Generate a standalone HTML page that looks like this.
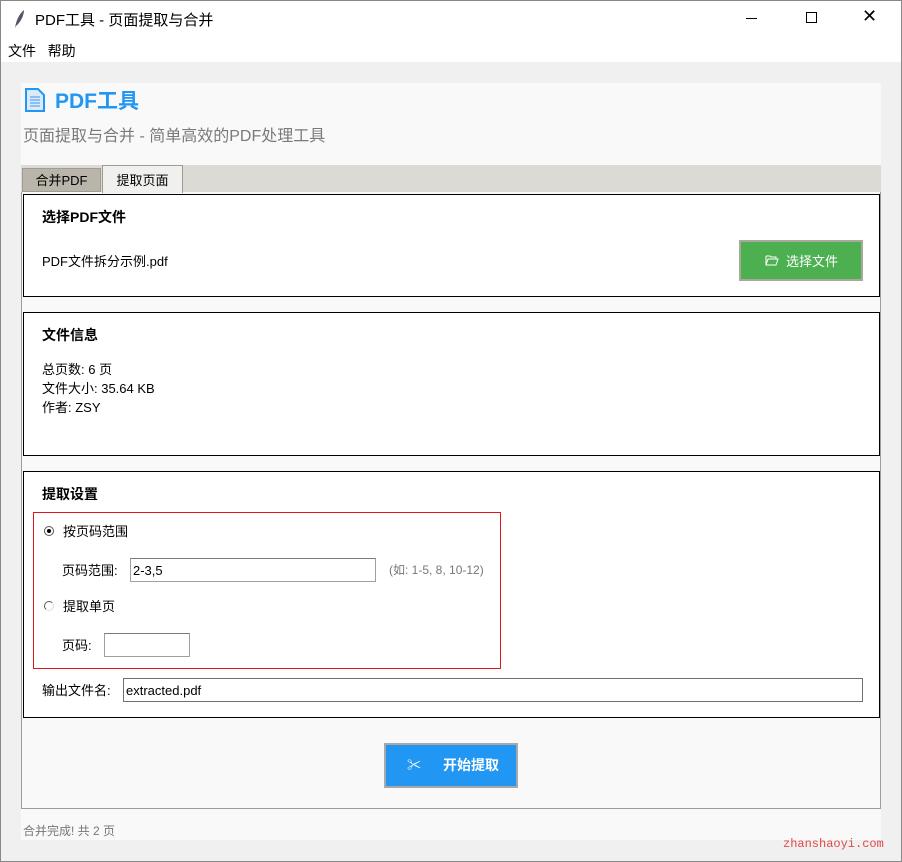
<!DOCTYPE html>
<html><head><meta charset="utf-8"><style>
*{margin:0;padding:0;box-sizing:border-box}
body{width:902px;height:862px;position:relative;background:#f0f0f0;font-family:"Liberation Sans","Noto Sans CJK SC",sans-serif;overflow:hidden;color:#000}
.a{position:absolute}
.win{left:0;top:0;width:902px;height:862px;border:1px solid #888}
.box{background:#fff;border:1px solid #000}
.t{font-size:13px;white-space:nowrap}
.inp{background:#fff;border:1px solid #a0a0a0;border-top-color:#7a7a7a;font-size:13px;padding:3px 2px 0;line-height:17px}
</style></head><body>
<div class="a" style="left:0;top:0;width:902px;height:62px;background:#fff"></div>
<svg class="a" style="left:12px;top:9px" width="14" height="20" viewBox="0 0 14 20"><path d="M3 19 C4 12 7 5 12 1 C12 6 9 13 4 17Z" fill="#556"/></svg>
<div class="a t" style="left:35px;top:9px;font-size:15px">PDF工具 - 页面提取与合并</div>
<div class="a" style="left:746px;top:18px;width:11px;height:1px;background:#000"></div>
<div class="a" style="left:806px;top:12px;width:11px;height:11px;border:1px solid #000"></div>
<div class="a t" style="left:862px;top:6px;font-size:18px;font-weight:300">✕</div>
<div class="a t" style="left:8px;top:41px;font-size:14px">文件&nbsp;&nbsp;&nbsp;帮助</div>
<div class="a" style="left:21px;top:83px;width:860px;height:757px;background:#f9f9f9"></div>
<svg class="a" style="left:25px;top:88px" width="20" height="24" viewBox="0 0 20 24"><path d="M1 1H13L19 7V23H1Z" fill="#dbe9fb" stroke="#2196f3" stroke-width="2"/><path d="M5 9H15M5 12H15M5 15H15M5 18H15" stroke="#5aa8f0" stroke-width="1.3"/></svg>
<div class="a t" style="left:55px;top:85px;font-size:21px;font-weight:bold;color:#2196f3">PDF工具</div>
<div class="a t" style="left:23px;top:122px;font-size:16px;color:#7a7a7a">页面提取与合并 - 简单高效的PDF处理工具</div>
<div class="a" style="left:21px;top:165px;width:860px;height:27px;background:#dcdad5"></div>
<div class="a t" style="left:22px;top:168px;width:79px;height:24px;background:#bab5ab;border:1px solid #a09c94;text-align:center;line-height:24px">合并PDF</div>
<div class="a t" style="left:102px;top:165px;width:81px;height:28px;background:#f0f0ee;border:1px solid #a09c94;border-bottom:none;text-align:center;line-height:30px">提取页面</div>
<div class="a" style="left:21px;top:192px;width:860px;height:617px;border:1px solid #a09c94;border-top:none"></div>
<div class="a box" style="left:23px;top:194px;width:857px;height:103px"></div>
<div class="a t" style="left:42px;top:207px;font-size:14px;font-weight:bold">选择PDF文件</div>
<div class="a t" style="left:42px;top:251px">PDF文件拆分示例.pdf</div>
<div class="a" style="left:739px;top:240px;width:124px;height:41px;background:#4caf50;border:2px solid #a8a89c"></div>
<svg class="a" style="left:765px;top:255px" width="14" height="11" viewBox="0 0 14 11"><path d="M1 1H5L6 2H11V4M1 1V10H11L13 4H3L1 10" fill="none" stroke="#fff" stroke-width="1"/></svg>
<div class="a t" style="left:786px;top:251px;color:#fff">选择文件</div>
<div class="a box" style="left:23px;top:312px;width:857px;height:144px"></div>
<div class="a t" style="left:42px;top:325px;font-size:14px;font-weight:bold">文件信息</div>
<div class="a t" style="left:42px;top:360px;line-height:19px">总页数: 6 页<br>文件大小: 35.64 KB<br>作者: ZSY</div>
<div class="a box" style="left:23px;top:471px;width:857px;height:247px"></div>
<div class="a t" style="left:42px;top:484px;font-size:14px;font-weight:bold">提取设置</div>
<div class="a" style="left:33px;top:512px;width:468px;height:157px;border:1px solid #e0141e"></div>
<div class="a" style="left:44px;top:526px;width:10px;height:10px;border-radius:50%;border:1px solid #555;background:#fff"></div>
<div class="a" style="left:47px;top:529px;width:4px;height:4px;border-radius:50%;background:#000"></div>
<div class="a t" style="left:63px;top:521px">按页码范围</div>
<div class="a t" style="left:62px;top:560px">页码范围:</div>
<div class="a inp" style="left:130px;top:558px;width:246px;height:24px">2-3,5</div>
<div class="a t" style="left:389px;top:561px;font-size:12px;color:#777">(如: 1-5, 8, 10-12)</div>
<div class="a" style="left:44px;top:601px;width:10px;height:10px;border-radius:50%;border:1px solid #555;border-bottom-color:#ddd;border-right-color:#ddd;background:#fff"></div>
<div class="a t" style="left:63px;top:596px">提取单页</div>
<div class="a t" style="left:62px;top:635px">页码:</div>
<div class="a inp" style="left:104px;top:633px;width:86px;height:24px"></div>
<div class="a t" style="left:42px;top:680px">输出文件名:</div>
<div class="a inp" style="left:123px;top:678px;width:740px;height:24px;border-color:#707070">extracted.pdf</div>
<div class="a" style="left:384px;top:743px;width:134px;height:45px;background:#2196f3;border:2px solid #a8a8a8"></div>
<div class="a t" style="left:407px;top:755px;color:#fff;font-size:14px;font-weight:bold">✂</div>
<div class="a t" style="left:443px;top:755px;color:#fff;font-size:14px;font-weight:bold">开始提取</div>
<div class="a t" style="left:23px;top:822px;font-size:12px;color:#777">合并完成! 共 2 页</div>
<div class="a" style="left:881px;top:62px;width:21px;height:800px;background:#f0f0f0"></div>
<div class="a t" style="left:783px;top:837px;font-family:'Liberation Mono',monospace;font-size:12px;color:#e04848">zhanshaoyi.com</div>
<div class="a win"></div>
</body></html>
